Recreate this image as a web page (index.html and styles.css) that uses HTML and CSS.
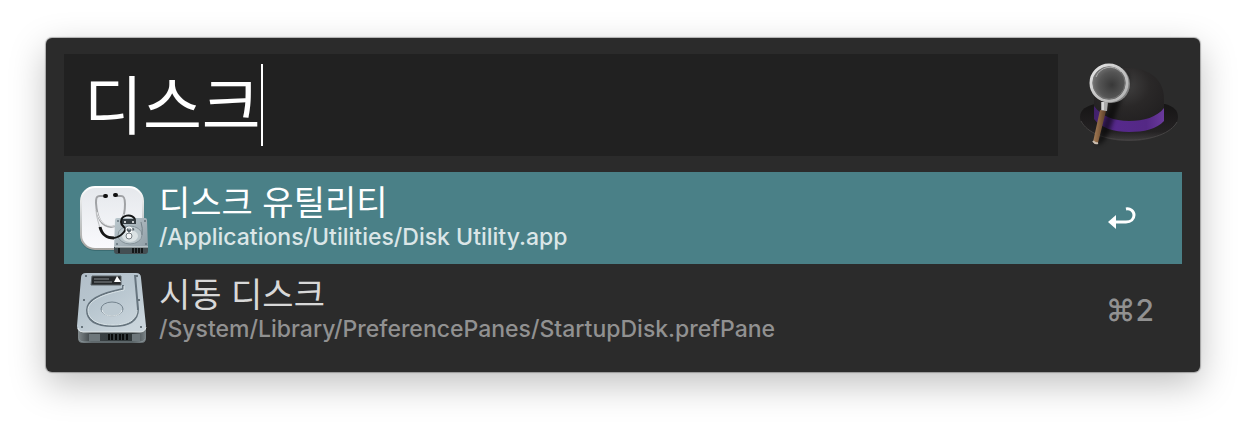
FILE: index.html
```html
<!DOCTYPE html>
<html lang="ko">
<head>
<meta charset="utf-8">
<meta name="viewport" content="width=device-width, initial-scale=1">
<title>디스크</title>
<link rel="stylesheet" href="styles.css">
</head>
<body>
<main class="launcher">
  <div class="search-row">
    <div class="search-box">
      <input class="search-input" type="text" value="디스크" aria-label="검색" spellcheck="false">
      <span class="caret"></span>
    </div>
    <svg class="hat" viewBox="0 0 108 100" aria-hidden="true">
      <defs>
        <radialGradient id="crown" cx="45%" cy="28%" r="70%"><stop offset="0" stop-color="#414040"/><stop offset=".5" stop-color="#2a2828"/><stop offset="1" stop-color="#211f20"/></radialGradient>
        <linearGradient id="band"><stop offset="0" stop-color="#40206a"/><stop offset=".3" stop-color="#56298c"/><stop offset=".75" stop-color="#542885"/><stop offset="1" stop-color="#6a3a9c"/></linearGradient>
        <linearGradient id="brim" x2="0" y2="1"><stop offset="0" stop-color="#161515"/><stop offset=".75" stop-color="#242223"/><stop offset="1" stop-color="#403e3f"/></linearGradient>
        <radialGradient id="lens" cx="58%" cy="55%" r="60%"><stop offset="0" stop-color="#383838"/><stop offset=".6" stop-color="#555"/><stop offset="1" stop-color="#7c7c7c"/></radialGradient>
        <linearGradient id="rim" x2="1" y2="1"><stop offset="0" stop-color="#e8e8e8"/><stop offset=".5" stop-color="#c4c4c4"/><stop offset="1" stop-color="#b4b4b4"/></linearGradient>
        <linearGradient id="wood" x2="1" y2=".2"><stop offset="0" stop-color="#b28c66"/><stop offset=".5" stop-color="#8b6543"/><stop offset="1" stop-color="#563b27"/></linearGradient>
        <filter id="soft" x="-50%" y="-50%" width="200%" height="200%"><feGaussianBlur stdDeviation="2"/></filter>
      </defs>
      <path d="M6 62c0-8 7-11 15-13h70c8 2 13 6 13 13 0 12-20 24-49 24S6 74 6 62z" fill="url(#brim)"/>
      <path d="M7 66c6 12 24 19 48 19s42-7 48-18" fill="none" stroke="#454343" stroke-width="1"/>
      <path d="M20 64V45c0-18 14-32 34-32 21 0 36 11 36 31v20c-8 8-20 11-35 11S28 72 20 64z" fill="url(#crown)"/>
      <path d="M20 51c7 10 20 15 35 15s28-4 35-13v13c-7 8-20 11-35 11S27 73 20 64z" fill="url(#band)"/>
      <path d="M36 48c4-5 10-7 14-12 7-8 6-15 2-21l-4 28-15 39c-3 5-7 8-11 8z" fill="#000" opacity=".55" filter="url(#soft)"/>
      <path d="M27 47h7l-1 9h-6z" fill="#aaa"/>
      <path d="M29 47v8" stroke="#d8d8d8" stroke-width="2"/>
      <path d="M26 55l6 1-8 32q-3 2-5-1z" fill="url(#wood)"/>
      <path d="M19 86q2 3 5 2" fill="none" stroke="#c9bdb0" stroke-width="2"/>
      <circle cx="37" cy="29" r="19" fill="#808080"/>
      <circle cx="35" cy="28" r="18" fill="url(#lens)" stroke="url(#rim)" stroke-width="3"/>
      <circle cx="35" cy="28" r="16" fill="none" stroke="#757575" stroke-width="1"/>
      <path d="M22 22a15 15 0 0 1 25-5" fill="none" stroke="#aaa" stroke-width="1"/>
    </svg>
  </div>
  <div class="results" role="listbox" aria-label="결과">
    <button class="result selected" type="button" role="option" aria-selected="true">
      <svg class="icon" viewBox="0 0 72 80" aria-hidden="true">
        <defs>
          <linearGradient id="tile" x2="0" y2="1"><stop offset="0" stop-color="#e5e8ec"/><stop offset="1" stop-color="#fafafd"/></linearGradient>
          <linearGradient id="edge" x2="0" y2="1"><stop offset="0" stop-color="#fff"/><stop offset=".5" stop-color="#c8cccd"/><stop offset="1" stop-color="#a7a5a1"/></linearGradient>
          <linearGradient id="miniPlate" x2="1" y2="1"><stop offset="0" stop-color="#bac7cd"/><stop offset=".5" stop-color="#a6b2b9"/><stop offset="1" stop-color="#8c9ba3"/></linearGradient>
        </defs>
        <rect x="4" y="9" width="64" height="64" rx="15" fill="#315f64" opacity=".6"/>
        <rect x="5" y="9" width="62" height="62" rx="14" fill="url(#tile)" stroke="url(#edge)" stroke-width="2"/>
        <path d="M27 18h-3c-4 0-4 3-4 7 1 15 5 23 15 24 10-1 14-9 14-23 0-6-1-8-4-8h-4" fill="none" stroke="#a0a2a5" stroke-width="2"/>
        <path d="M21 34c2 9 7 13 14 14s12-5 13-12" fill="none" stroke="#e9eaec" stroke-width="1"/>
        <path d="M29 18h1M39 17h1" stroke="#111" stroke-width="4" stroke-linecap="round"/>
        <path d="M20 32c0 7 3 13 4 19" fill="none" stroke="#bcbec0" stroke-width="1"/>
        <path d="M24 49c2 8 6 11 14 11" fill="none" stroke="#171717" stroke-width="3"/>
        <path d="M41 40h28q2 0 2 2l1 29q0 4-3 4H41q-3 0-3-4l1-29q0-2 2-2z" fill="url(#miniPlate)"/>
        <path d="M38 69h34v4q0 3-3 3H41q-3 0-3-3z" fill="#444f53"/>
        <path d="M43 70v5m14-5v5m3-5v5m3-5v5m3-5v5" stroke="#141819" stroke-width="2"/>
        <path d="M39 69h33" stroke="#d8e0e2" stroke-width="1"/>
        <ellipse cx="54" cy="57" rx="12" ry="9" fill="#b9c5ca" stroke="#86939a"/>
        <path d="M66 57q1-7-1-13" fill="none" stroke="#75838a"/>
        <ellipse cx="54" cy="58" rx="8" ry="6" fill="#dbe2e4"/>
        <rect x="46" y="41" width="14" height="5" fill="#333b40"/>
        <path d="M38 60q6-1 10-6c4-5-3-5-3-10 0-7 10-9 14-3" fill="none" stroke="#121415" stroke-width="2"/>
        <circle cx="49" cy="44" r="1" fill="#fff"/><circle cx="57" cy="44" r="1" fill="#fff"/>
        <path d="M49 50l4 3 5-2m-5 2v4" stroke="#555f66" stroke-width="2" fill="none"/>
        <circle cx="53" cy="52" r="3" fill="none" stroke="#fff"/><circle cx="53" cy="58" r="3" fill="#f6f7f8" stroke="#777f83"/>
        <circle cx="42" cy="43" r="1" fill="#637178"/><circle cx="69" cy="43" r="1" fill="#637178"/><circle cx="41" cy="66" r="1" fill="#637178"/><circle cx="70" cy="66" r="1" fill="#637178"/>
      </svg>
      <span class="text"><span class="title">디스크 유틸리티</span><span class="path">/Applications/Utilities/Disk Utility.app</span></span>
      <svg class="return" viewBox="0 0 28 24" aria-label="Return"><path d="M18 3c4-1 8 2 8 6s-3 7-8 7H7" fill="none" stroke="currentColor" stroke-width="3"/><path d="M0 16l8-7v14z" fill="currentColor"/></svg>
    </button>
    <button class="result" type="button" role="option" aria-selected="false">
      <svg class="icon" viewBox="0 0 72 80" aria-hidden="true">
        <defs>
          <linearGradient id="plate" x2=".7" y2="1"><stop offset="0" stop-color="#b2bec8"/><stop offset=".5" stop-color="#b8c6cf"/><stop offset="1" stop-color="#cad5dc"/></linearGradient>
          <linearGradient id="side"><stop offset="0" stop-color="#80888b"/><stop offset=".2" stop-color="#3b4245"/><stop offset=".8" stop-color="#30383a"/><stop offset="1" stop-color="#7c8589"/></linearGradient>
        </defs>
        <path d="M2 59h68v9q0 5-5 5H7q-5 0-5-5z" fill="url(#side)"/>
        <path d="M3 69q1 3 5 3h56q4 0 5-3" fill="none" stroke="#859094" stroke-width="1"/>
        <path d="M13 64h11v7H13zM56 64h8v7h-8z" fill="#6d777b"/>
        <path d="M33 64v6m3-6v6m4-6v6m4-6v6m3-6v6m4-6v6" stroke="#090b0b" stroke-width="2"/>
        <path d="M10 3h50q5 0 5 5l5 48q0 6-6 6H7q-6 0-6-6l4-48q0-5 5-5z" fill="url(#plate)"/>
        <path d="M2 58q1 4 5 4h57q5 0 6-5" fill="none" stroke="#e1e8e9" stroke-width="1"/>
        <path d="M47 15v4C26 23 11 29 11 40c0 11 10 16 26 16 18 0 25-6 25-17L59 5" fill="none" stroke="#66747e" stroke-width="2"/>
        <path d="M48 16v4C28 24 12 30 12 40c0 10 10 15 25 15 16 0 24-6 24-15" fill="none" stroke="#dbe5e9" stroke-width="1"/>
        <ellipse cx="36" cy="39" rx="11" ry="7" fill="#bcc9d1" stroke="#73828d"/>
        <path d="M26 40c1 8 19 8 20 0" fill="none" stroke="#e6edf0"/>
        <path d="M16 6h29v9H15z" fill="#26292b" stroke="#5c6468"/>
        <path d="M18 9h15m-15 3h18" stroke="#858b8e" stroke-width="1"/>
        <path d="M41 6l4 6h-7z" fill="#fff"/>
        <circle cx="10" cy="6" r="1" fill="#4d5960"/><circle cx="61" cy="6" r="1" fill="#4d5960"/><circle cx="8" cy="30" r="1" fill="#4d5960"/><circle cx="63" cy="30" r="1" fill="#4d5960"/><circle cx="6" cy="57" r="1" fill="#4d5960"/><circle cx="65" cy="57" r="1" fill="#4d5960"/>
      </svg>
      <span class="text"><span class="title">시동 디스크</span><span class="path">/System/Library/PreferencePanes/StartupDisk.prefPane</span></span>
      <span class="shortcut">⌘2</span>
    </button>
  </div>
</main>
</body>
</html>
```
FILE: styles.css
```css
* { box-sizing: border-box; }

body {
  margin: 0;
  padding: 38px 46px 54px;
  background: #fff;
  font-family: Inter, "Noto Sans CJK KR", sans-serif;
}

.launcher {
  padding: 16px 18px;
  border-radius: 6px;
  background: #2b2b2b;
  box-shadow: 0 0 1px 1px rgba(0, 0, 0, .28), 0 12px 36px rgba(0, 0, 0, .25);
}

.search-row {
  display: flex;
  align-items: center;
  gap: 16px;
  margin-bottom: 16px;
}

.search-box {
  display: flex;
  flex: 1;
  align-items: center;
  height: 102px;
  padding-left: 20px;
  background: #212121;
}

.search-input {
  field-sizing: content;
  height: 82px;
  padding: 0 0 8px;
  border: 0;
  outline: 0;
  background: none;
  color: #fff;
  font: 400 64px/74px "Noto Sans CJK KR", sans-serif;
}

.caret {
  width: 2px;
  height: 82px;
  background: #fff;
}

.hat {
  width: 108px;
  height: 100px;
}

.results {
  display: flex;
  flex-direction: column;
}

.result {
  display: flex;
  align-items: center;
  width: 100%;
  height: 92px;
  padding: 0 28px 0 12px;
  border: 0;
  background: none;
  color: #919191;
  font-family: inherit;
  text-align: left;
}

.selected {
  background: #4a8087;
  color: #fff;
}

.icon {
  flex: none;
  width: 72px;
  height: 80px;
  margin-right: 11px;
}

.text {
  display: flex;
  flex: 1;
  flex-direction: column;
}

.title {
  color: #d8d8d8;
  font: 400 34px/38px "Noto Sans CJK KR", sans-serif;
}

.path {
  font-size: 23px;
  font-weight: 500;
  line-height: 34px;
}

.selected .title { color: #fff; }
.selected .path { color: #dbe6e7; }

.return {
  width: 28px;
  height: 24px;
  margin-right: 18px;
}

.shortcut {
  font-size: 30px;
  font-weight: 500;
  line-height: 40px;
}
```
